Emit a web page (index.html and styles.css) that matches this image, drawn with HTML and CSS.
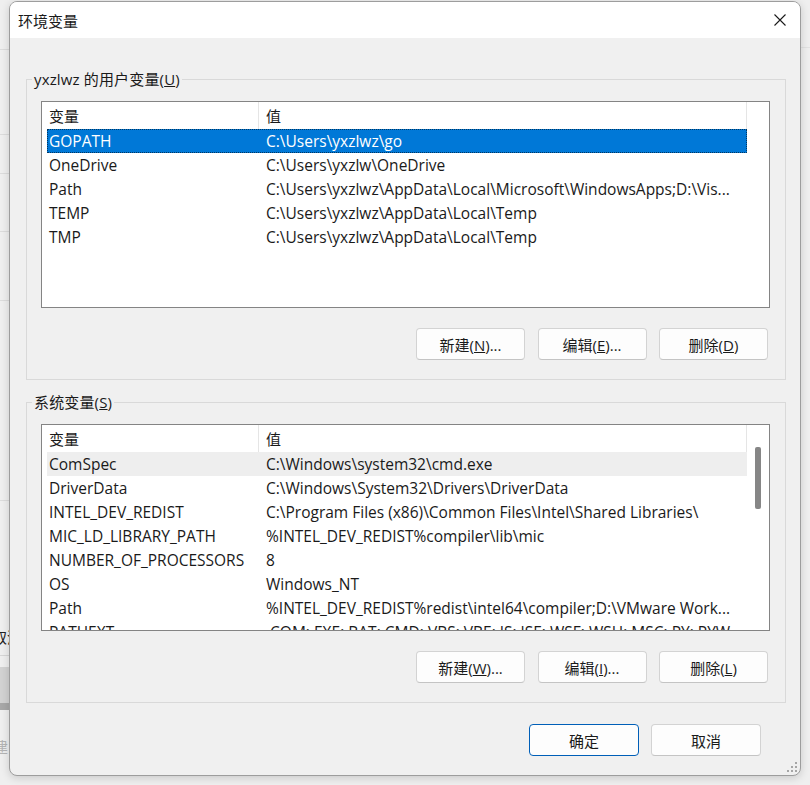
FILE: index.html
```html
<!DOCTYPE html>
<html lang="zh-CN">
  <head>
    <meta charset="UTF-8" />
    <title>环境变量</title>
    <link rel="stylesheet" href="styles.css">
  </head>

  <body>
    <div class="desk">
      <span class="behind behind-cancel">取消</span>
      <span class="behind behind-new">建</span>

      <div class="dialog">
        <div class="titlebar">
          <span class="title">环境变量</span>
          <svg class="close" width="12" height="12" viewBox="0 0 12 12">
            <path d="M0.5 0.5 L11.5 11.5 M11.5 0.5 L0.5 11.5" stroke="#1a1a1a" stroke-width="1.1" fill="none" />
          </svg>
        </div>

        <div class="dialog-body">
          <!-- user variables -->
          <fieldset class="group">
            <legend>yxzlwz 的用户变量(<u>U</u>)</legend>
            <div class="group-inner">
              <div class="list">
                <div class="list-main">
                  <div class="list-head"><span>变量</span><span>值</span></div>
                  <div class="row selected"><span>GOPATH</span><span>C:\Users\yxzlwz\go</span></div>
                  <div class="row"><span>OneDrive</span><span>C:\Users\yxzlw\OneDrive</span></div>
                  <div class="row"><span>Path</span><span>C:\Users\yxzlwz\AppData\Local\Microsoft\WindowsApps;D:\Vis...</span></div>
                  <div class="row"><span>TEMP</span><span>C:\Users\yxzlwz\AppData\Local\Temp</span></div>
                  <div class="row"><span>TMP</span><span>C:\Users\yxzlwz\AppData\Local\Temp</span></div>
                </div>
                <div class="list-side"></div>
              </div>
              <div class="btns">
                <button>新建(<u>N</u>)...</button>
                <button>编辑(<u>E</u>)...</button>
                <button>删除(<u>D</u>)</button>
              </div>
            </div>
          </fieldset>

          <!-- system variables -->
          <fieldset class="group">
            <legend>系统变量(<u>S</u>)</legend>
            <div class="group-inner">
              <div class="list">
                <div class="list-main">
                  <div class="list-head"><span>变量</span><span>值</span></div>
                  <div class="row hot"><span>ComSpec</span><span>C:\Windows\system32\cmd.exe</span></div>
                  <div class="row"><span>DriverData</span><span>C:\Windows\System32\Drivers\DriverData</span></div>
                  <div class="row"><span>INTEL_DEV_REDIST</span><span>C:\Program Files (x86)\Common Files\Intel\Shared Libraries\</span></div>
                  <div class="row"><span>MIC_LD_LIBRARY_PATH</span><span>%INTEL_DEV_REDIST%compiler\lib\mic</span></div>
                  <div class="row"><span>NUMBER_OF_PROCESSORS</span><span>8</span></div>
                  <div class="row"><span>OS</span><span>Windows_NT</span></div>
                  <div class="row"><span>Path</span><span>%INTEL_DEV_REDIST%redist\intel64\compiler;D:\VMware Work...</span></div>
                  <div class="row"><span>PATHEXT</span><span>.COM;.EXE;.BAT;.CMD;.VBS;.VBE;.JS;.JSE;.WSF;.WSH;.MSC;.PY;.PYW</span></div>
                </div>
                <div class="list-side">
                  <div class="thumb"></div>
                </div>
              </div>
              <div class="btns">
                <button>新建(<u>W</u>)...</button>
                <button>编辑(<u>I</u>)...</button>
                <button>删除(<u>L</u>)</button>
              </div>
            </div>
          </fieldset>

          <div class="footer">
            <button class="default">确定</button>
            <button>取消</button>
          </div>
        </div>

        <svg class="grip" width="11" height="11" viewBox="0 0 11 11">
          <rect x="8" y="0" width="2" height="2" fill="#a6a6a6" />
          <rect x="4" y="4" width="2" height="2" fill="#a6a6a6" />
          <rect x="8" y="4" width="2" height="2" fill="#a6a6a6" />
          <rect x="0" y="8" width="2" height="2" fill="#a6a6a6" />
          <rect x="4" y="8" width="2" height="2" fill="#a6a6a6" />
          <rect x="8" y="8" width="2" height="2" fill="#a6a6a6" />
        </svg>
      </div>
    </div>
  </body>
</html>
```

FILE: styles.css
```css
html,
body {
  margin: 0;
  padding: 0;
}
body {
  font-family: "Open Sans", "Noto Sans CJK SC", sans-serif;
  font-size: 15px;
  color: #1a1a1a;
}

/* what is left visible of the desktop behind the dialog */
.desk {
  position: relative;
  width: 810px;
  height: 785px;
  box-sizing: border-box;
  padding: 1px 0 0 9px;
  overflow: hidden;
  background:
    linear-gradient(#d2d2d2, #d2d2d2) 0 667px / 9px 36px no-repeat,
    linear-gradient(#a8a8a8, #a8a8a8) 0 703px / 9px 7px no-repeat,
    linear-gradient(#d6d6d6, #d6d6d6) 0 655px / 9px 1px no-repeat,
    linear-gradient(#dcdcdc, #dcdcdc) 0 49px / 9px 1px no-repeat,
    linear-gradient(#dcdcdc, #dcdcdc) 0 134px / 9px 1px no-repeat,
    linear-gradient(#dcdcdc, #dcdcdc) 0 173px / 9px 1px no-repeat,
    linear-gradient(#dcdcdc, #dcdcdc) 0 231px / 9px 1px no-repeat,
    linear-gradient(#dcdcdc, #dcdcdc) 0 300px / 9px 1px no-repeat,
    linear-gradient(#dcdcdc, #dcdcdc) 0 500px / 9px 1px no-repeat,
    linear-gradient(#e2e2e2, #e2e2e2) 801px 47px / 9px 1px no-repeat,
    #efefef;
}
.behind {
  position: absolute;
  font-size: 15px;
  line-height: 16px;
}
.behind-cancel {
  left: -8px;
  top: 629px;
  color: #222;
}
.behind-new {
  left: -7px;
  top: 739px;
  color: #b4b4b4;
}

.dialog {
  position: relative;
  width: 792px;
  height: 775px;
  box-sizing: border-box;
  border: 1px solid #9d9d9d;
  border-radius: 8px;
  background: #f0f0f0;
  overflow: hidden;
  box-shadow: 0 2px 8px rgba(0, 0, 0, 0.16);
}
.titlebar {
  height: 36px;
  background: #fff;
  display: flex;
  align-items: center;
  justify-content: space-between;
  padding: 0 14px 0 8px;
}
.title {
  font-size: 15px;
  color: #1a1a1a;
}
.close {
  display: block;
}

.dialog-body {
  padding: 0 14px 0 16px;
}
.group {
  margin: 31px 0 0;
  padding: 0;
  border: 1px solid #d9d9d9;
  min-width: 0;
}
.group + .group {
  margin-top: 12px;
}
.group legend {
  margin-left: 5px;
  padding: 0 2px;
  line-height: 20px;
  letter-spacing: 0.15px;
}
.group-inner {
  padding: 12px 15px 19px 14px;
}

.list {
  height: 207px;
  box-sizing: border-box;
  border: 1px solid #848484;
  background: #fff;
  display: flex;
  overflow: hidden;
}
.list-main {
  width: 705px;
  flex: none;
}
.list-head {
  display: flex;
  height: 27px;
}
.list-head span {
  box-sizing: border-box;
  padding: 2px 0 0 7px;
  line-height: 25px;
  border-right: 1px solid #e5e5e5;
}
.list-head span:first-child {
  width: 217px;
}
.list-head span:last-child {
  width: 488px;
}
.row {
  display: flex;
  margin-left: 5px;
  height: 24px;
  line-height: 24px;
  font-size: 15.5px;
  white-space: nowrap;
}
.row span {
  box-sizing: border-box;
  overflow: hidden;
}
.row span:first-child {
  width: 212px;
  padding-left: 2px;
}
.row span:last-child {
  width: 488px;
  padding-left: 7px;
}
.row.selected {
  background: #0078d7;
  color: #fff;
  outline: 1px dotted rgba(0, 0, 0, 0.55);
  outline-offset: -1px;
}
.row.hot {
  background: #eeeeee;
}
.list-side {
  flex: 1;
}
.thumb {
  margin: 22px 0 0 8px;
  width: 6px;
  height: 62px;
  border-radius: 2px;
  background: #868686;
}

.btns {
  display: flex;
  justify-content: flex-end;
  gap: 12.5px;
  margin-top: 20px;
  padding-right: 2px;
}
button {
  width: 109px;
  height: 32px;
  padding: 0;
  box-sizing: border-box;
  border: 1px solid #d3d3d3;
  border-bottom-color: #c4c4c4;
  border-radius: 4px;
  background: #fdfdfd;
  font: inherit;
  color: #1a1a1a;
}
.footer {
  display: flex;
  justify-content: flex-end;
  gap: 12px;
  margin-top: 21px;
  padding-right: 25px;
}
.footer button {
  width: 110px;
}
.footer .default {
  border: 1px solid #005fb8;
}

.grip {
  position: absolute;
  right: 2px;
  bottom: 2px;
}
```
